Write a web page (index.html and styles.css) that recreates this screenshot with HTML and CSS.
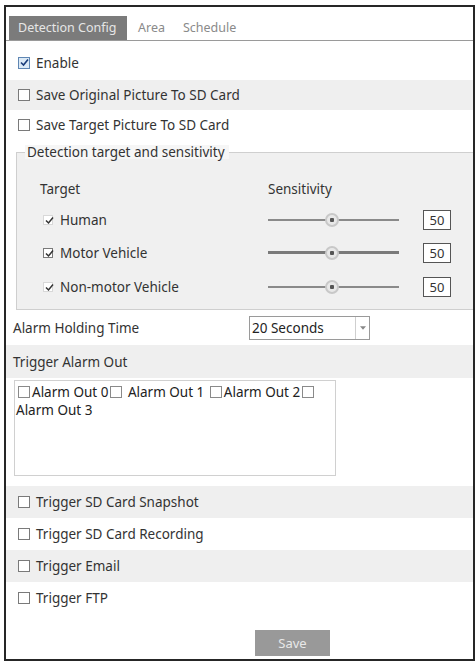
FILE: index.html
```html
<!DOCTYPE html>
<html>
<head>
<meta charset="utf-8">
<link rel="stylesheet" href="styles.css">
</head>
<body>
<div class="frame">
  <div class="tabs">
    <div class="tab active">Detection Config</div>
    <div class="tab">Area</div>
    <div class="tab">Schedule</div>
  </div>

  <div class="row first">
    <span class="cb checked blue"><svg viewBox="0 0 11 11"><path d="M2 5.5 L4.5 8 L9 2.5" fill="none" stroke="#1a3c7a" stroke-width="1.6"/></svg></span>
    <span>Enable</span>
  </div>
  <div class="row gray"><span class="cb"></span><span>Save Original Picture To SD Card</span></div>
  <div class="row"><span class="cb"></span><span>Save Target Picture To SD Card</span></div>

  <fieldset class="group">
    <legend>Detection target and sensitivity</legend>
    <div class="grid">
      <div class="head">Target</div>
      <div class="head">Sensitivity</div>
      <div></div>

      <div class="target"><span class="cb checked light"><svg viewBox="0 0 11 11"><path d="M2 5.5 L4.5 8 L9 2.5" fill="none" stroke="#333" stroke-width="1.5"/></svg></span><span>Human</span></div>
      <div class="slider"><span class="track"></span><span class="thumb"></span></div>
      <div class="num">50</div>

      <div class="target"><span class="cb checked"><svg viewBox="0 0 11 11"><path d="M2 5.5 L4.5 8 L9 2.5" fill="none" stroke="#333" stroke-width="1.5"/></svg></span><span>Motor Vehicle</span></div>
      <div class="slider"><span class="track thick"></span><span class="thumb"></span></div>
      <div class="num">50</div>

      <div class="target"><span class="cb checked light"><svg viewBox="0 0 11 11"><path d="M2 5.5 L4.5 8 L9 2.5" fill="none" stroke="#333" stroke-width="1.5"/></svg></span><span>Non-motor Vehicle</span></div>
      <div class="slider"><span class="track"></span><span class="thumb"></span></div>
      <div class="num">50</div>
    </div>
  </fieldset>

  <div class="row hold">
    <span class="label">Alarm Holding Time</span>
    <div class="select"><span class="sel-text">20 Seconds</span><span class="sel-arrow"><svg viewBox="0 0 7 4"><path d="M0 0 H7 L3.5 4 Z" fill="#888"/></svg></span></div>
  </div>
  <div class="row gray plain">Trigger Alarm Out</div>
  <div class="outbox">
    <span class="cb sm"></span>Alarm Out 0<span class="cb sm"></span> Alarm Out 1 <span class="cb sm"></span>Alarm Out 2<span class="cb sm"></span><br>Alarm Out 3
  </div>

  <div class="triggers">
    <div class="row gray"><span class="cb"></span><span>Trigger SD Card Snapshot</span></div>
    <div class="row"><span class="cb"></span><span>Trigger SD Card Recording</span></div>
    <div class="row gray"><span class="cb"></span><span>Trigger Email</span></div>
    <div class="row"><span class="cb"></span><span>Trigger FTP</span></div>
  </div>

  <div class="actions"><button class="save">Save</button></div>
</div>
</body>
</html>
```
FILE: styles.css
```css
* { box-sizing: border-box; }
html, body { margin: 0; padding: 0; background: #fff; }
body {
  font-family: "Noto Sans", "Open Sans", sans-serif;
  font-size: 13.5px;
  color: #333;
}
.frame {
  margin: 5px 0 0 4px;
  width: 471px;
  height: 656px;
  border: 2px solid #262626;
  display: flex;
  flex-direction: column;
}
.tabs {
  display: flex;
  align-items: flex-end;
  margin-top: 9px;
  padding-left: 3px;
  border-bottom: 1px solid #9a9a9a;
  height: 25px;
}
.tab {
  height: 24px;
  line-height: 24px;
  font-size: 12.5px;
  color: #8a8a8a;
  padding: 0 9px;
}
.tab.active {
  background: #7b7b7b;
  color: #e6e6e6;
  width: 118px;
  padding: 0 0 0 9px;
  margin-right: 2px;
}
.row {
  display: flex;
  align-items: center;
  height: 30px;
  padding-left: 12px;
  gap: 6px;
}
.row.first { height: 39px; padding-top: 4px; }
.row.gray { background: #efefef; }
.row.plain { height: 33px; padding-left: 7px; }
.cb {
  display: inline-block;
  width: 12px;
  height: 12px;
  border: 1px solid #7a7a7a;
  background: #fff;
  flex: none;
  position: relative;
}
.cb svg { display: block; width: 11px; height: 11px; position: absolute; left: 0; top: -1px; }
.cb.blue { background: #dceaf6; border-color: #5f86b3; }
.cb.light { border-color: #d8d8d8; }
.group {
  margin: 5px 0 0 10px;
  padding: 0;
  border: 1px solid #cfcfcf;
  border-right: none;
  background: #f0f0f0;
  height: 165px;
}
.group legend {
  margin-left: 8px;
  padding: 0 4px 0 2px;
  font-size: 13.5px;
  color: #333;
  line-height: 14px;
  background: #f6f6f6;
}
.grid {
  display: grid;
  grid-template-columns: 228px 155px 32px;
  grid-template-rows: 31px 32px 33px 35px;
  align-items: center;
  padding: 14px 0 0 23px;
}
.target { display: flex; align-items: center; gap: 7px; padding-left: 3px; }
.target .cb { width: 10px; height: 10px; }
.slider {
  position: relative;
  width: 131px;
  height: 14px;
}
.track {
  position: absolute;
  left: 0; right: 0;
  top: 6px;
  height: 2px;
  background: #8a8a8a;
}
.track.thick { top: 5px; height: 3px; background: #7a7a7a; }
.thumb {
  position: absolute;
  left: 57px;
  top: 0;
  width: 14px;
  height: 14px;
  border-radius: 50%;
  border: 2px solid #c8c8c8;
  background: radial-gradient(circle, #555 0 2px, #e8e8e8 2.5px);
}
.num {
  width: 28px;
  height: 20px;
  border: 1px solid #555;
  background: #fff;
  text-align: center;
  line-height: 18px;
  font-size: 13px;
  color: #333;
}
.hold {
  height: 35px;
  padding-left: 7px;
  gap: 0;
}
.hold .label { width: 236px; }
.select {
  display: flex;
  width: 121px;
  height: 24px;
  border: 1px solid #9a9a9a;
  background: #fff;
}
.sel-text { flex: 1; padding-left: 2px; line-height: 22px; color: #222; }
.sel-arrow {
  width: 14px;
  border-left: 1px solid #cfcfcf;
  display: flex;
  align-items: center;
  justify-content: center;
}
.sel-arrow svg { width: 6px; height: 4px; }
.outbox {
  margin: 2px 0 0 8px;
  width: 322px;
  height: 96px;
  border: 1px solid #d0d0d0;
  padding: 2px 0 0 1px;
  line-height: 18px;
  color: #222;
}
.cb.sm { width: 12px; height: 12px; vertical-align: -1px; margin: 0 2px 0 2px; border-color: #8a8a8a; }
.triggers { margin-top: 10px; }
.triggers .row { height: 32px; }
.actions {
  display: flex;
  justify-content: flex-start;
  padding: 16px 0 0 249px;
}
.save {
  width: 75px;
  height: 26px;
  border: none;
  background: #999;
  color: #e8e8e8;
  font-family: inherit;
  font-size: 13px;
}
```
